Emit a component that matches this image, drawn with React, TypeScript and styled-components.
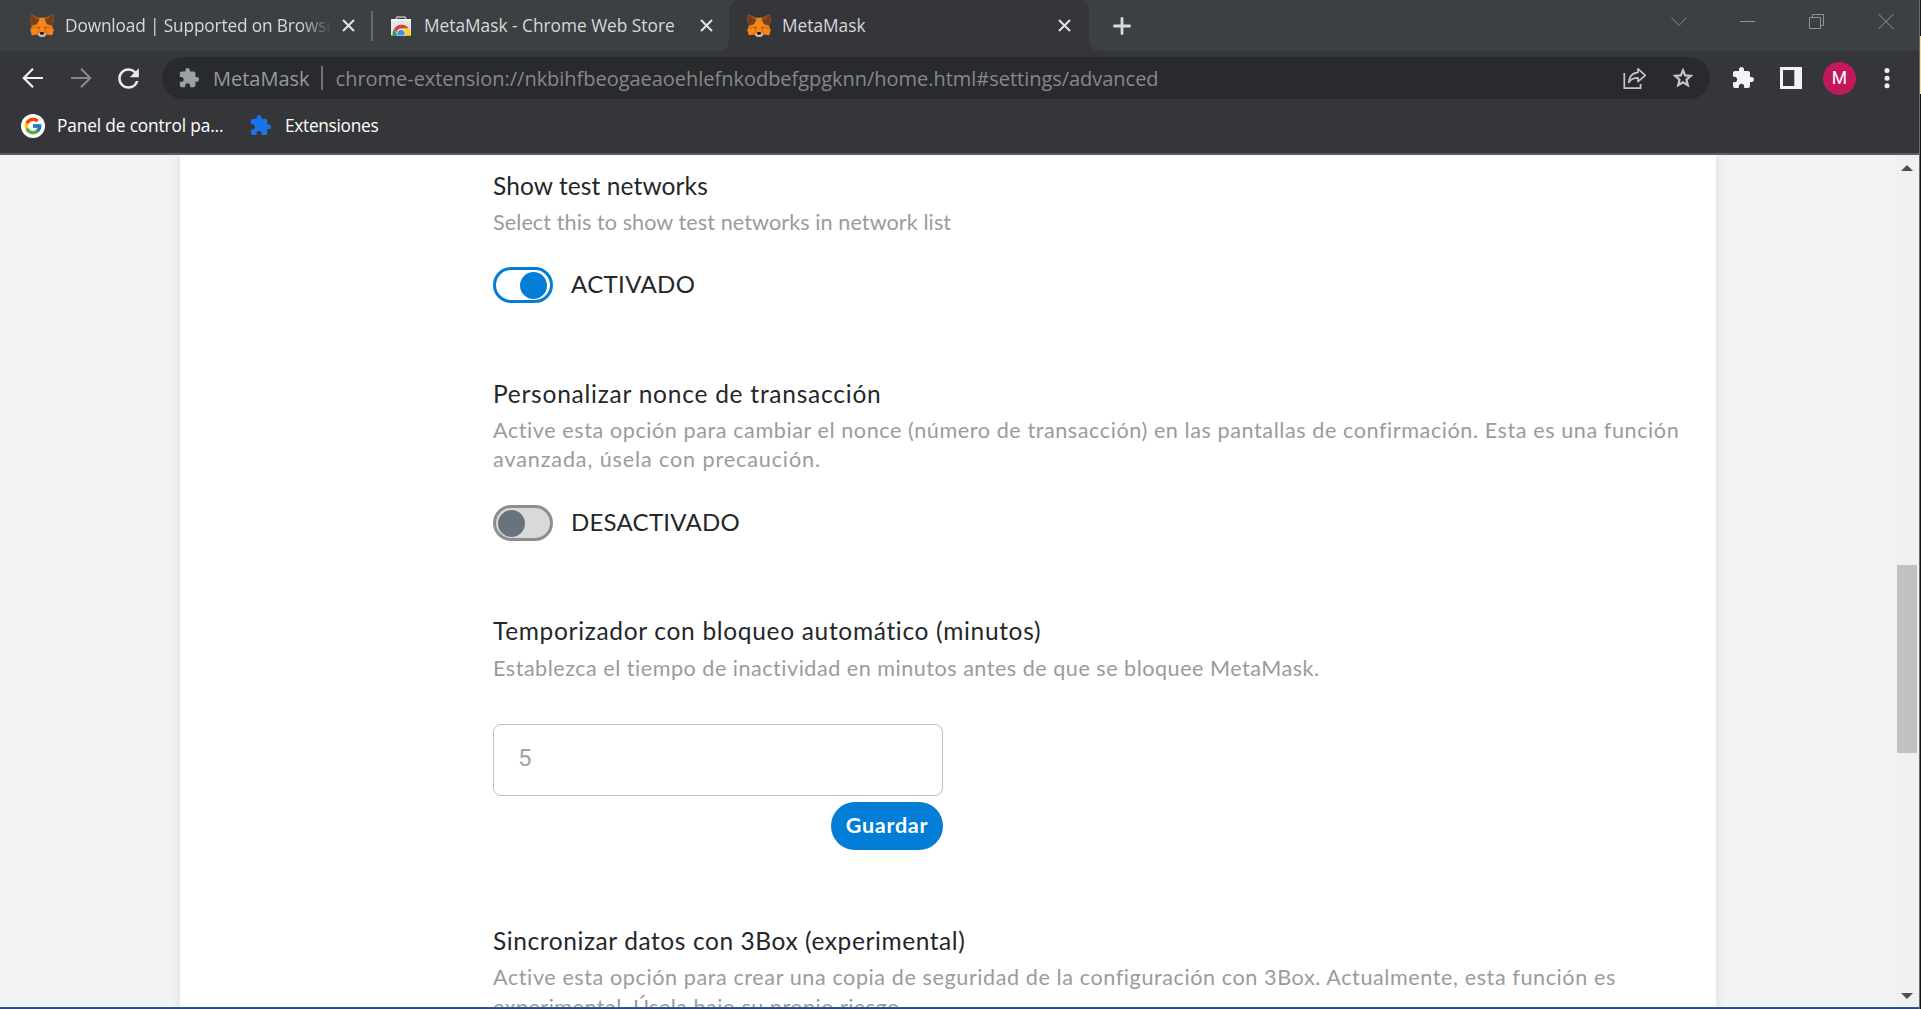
import React from 'react';
import styled, { createGlobalStyle } from 'styled-components';
import { MdExtension, MdRefresh } from 'react-icons/md';
import { FcGoogle } from 'react-icons/fc';

const GlobalStyle = createGlobalStyle`
  * { box-sizing: border-box; }
  html, body { margin: 0; padding: 0; overflow: hidden; background: #35363a; }
  svg { display: block; flex: none; }
`;

const chromeFont = `'Open Sans', 'Noto Sans', sans-serif`;
const pageFont = `Lato, 'Open Sans', sans-serif`;

const Desktop = styled.div`
  display: grid;
  grid-template-columns: 1919px 1px 1px;
  width: 1921px;
  height: 1009px;
  overflow: hidden;
`;
const Window = styled.div`
  display: flex;
  flex-direction: column;
  min-width: 0;
  height: 1009px;
`;
const WindowEdge = styled.div`
  background: #6b6c6e;
`;
const Behind = styled.div`
  background: linear-gradient(#191c1c 0 36px, #f3dfa6 36px 94px, #101212 94px);
`;

/* Tab strip */
const TabStrip = styled.div`
  display: flex;
  height: 51px;
  flex: none;
  background: #35363a;
`;
const InactiveTabs = styled.div`
  display: flex;
  align-items: center;
  width: 729px;
  background: #3c4043;
  border-radius: 0 0 10px 0;
`;
const Tab = styled.div<{ $width: number; $left: number; $right: number }>`
  display: flex;
  align-items: center;
  width: ${(p) => p.$width}px;
  height: 51px;
  padding-left: ${(p) => p.$left}px;
  padding-right: ${(p) => p.$right}px;
`;
const ActiveTabWrap = styled.div`
  background: #3c4043;
`;
const ActiveTab = styled(Tab)`
  background: #35363a;
  border-radius: 11px 11px 0 0;
`;
const TabTitle = styled.span<{ $gap: number; $fade?: boolean; $spacing?: number }>`
  flex: 1;
  min-width: 0;
  margin-left: ${(p) => p.$gap}px;
  margin-right: ${(p) => (p.$fade ? 10 : 0)}px;
  overflow: hidden;
  white-space: nowrap;
  font: 17.3px/28px ${chromeFont};
  letter-spacing: ${(p) => p.$spacing ?? 0}px;
  color: #d6d8da;
  ${(p) => p.$fade && 'mask-image: linear-gradient(90deg, #000 calc(100% - 32px), transparent);'}
`;
const TabDivider = styled.div`
  width: 2px;
  height: 30px;
  background: #66696c;
`;
const StripRest = styled.div`
  display: flex;
  flex: 1;
  align-items: center;
  padding-left: 24px;
  background: #3c4043;
  border-radius: 0 0 0 10px;
`;
const WindowControls = styled.div`
  display: flex;
  gap: 53px;
  margin: -8px 25px 0 auto;
`;

/* Toolbar */
const Toolbar = styled.div`
  display: flex;
  align-items: center;
  height: 54px;
  flex: none;
  padding-left: 21px;
  background: #35363a;
`;
const NavButtons = styled.div`
  display: flex;
  align-items: center;
  width: 141px;
  gap: 24px;
  color: #e8eaed;
`;
const ReloadButton = styled.div`
  margin-left: -4px;
`;
const Omnibox = styled.div`
  display: flex;
  align-items: center;
  width: 1548px;
  height: 42px;
  padding: 0 16px 0 16px;
  border-radius: 21px;
  background: #292a2d;
  color: #9aa0a6;
`;
const UrlText = styled.span<{ $gap: number; $dim?: boolean; $spacing?: number }>`
  margin: 1px 0 0 ${(p) => p.$gap}px;
  font: 20px/30px ${chromeFont};
  letter-spacing: ${(p) => p.$spacing ?? 0}px;
  white-space: nowrap;
  color: ${(p) => (p.$dim ? '#86888b' : '#969ba1')};
`;
const UrlDivider = styled.div`
  width: 2px;
  height: 24px;
  margin-left: 11px;
  background: #6f7276;
`;
const OmniActions = styled.div`
  display: flex;
  align-items: center;
  gap: 25px;
  margin-left: auto;
  color: #c4c6c8;
`;
const ToolbarActions = styled.div`
  display: flex;
  align-items: center;
  margin-left: 21px;
  color: #f1f3f4;
`;
const PanelButton = styled.div`
  margin-left: 25px;
`;
const Avatar = styled.div`
  display: flex;
  align-items: center;
  justify-content: center;
  width: 33px;
  height: 33px;
  margin: 1px 27px 0 21px;
  border-radius: 50%;
  background: #c2185b;
  color: #fff;
  font: 17.5px/33px Roboto, sans-serif;
`;
const BookmarkBar = styled.div`
  display: flex;
  align-items: center;
  height: 50px;
  flex: none;
  padding: 0 0 7px 21px;
  background: #35363a;
  border-bottom: 2px solid #5c5d61;
`;
const Bookmark = styled.div<{ $width: number; $gap: number; $spacing: number }>`
  display: flex;
  align-items: center;
  gap: ${(p) => p.$gap}px;
  width: ${(p) => p.$width}px;
  white-space: nowrap;
  font: 17.3px/26px ${chromeFont};
  letter-spacing: ${(p) => p.$spacing}px;
  color: #fff;
`;
const GoogleBadge = styled.div`
  display: flex;
  align-items: center;
  justify-content: center;
  flex: none;
  width: 24px;
  height: 24px;
  border-radius: 50%;
  background: #fff;
`;

/* Page */
const Page = styled.div`
  display: flex;
  flex: 1;
  min-height: 0;
  overflow: hidden;
  background: #f2f3f5;
`;
const Panel = styled.main`
  width: 1536px;
  margin-left: 180px;
  padding: 13px 0 0 313px;
  background: #fff;
  box-shadow: 0 0 11px rgba(0, 0, 0, 0.1);
`;
const Setting = styled.section`
  margin-bottom: 73px;
  font-family: ${pageFont};
`;
const Heading = styled.h2<{ $spacing: number }>`
  margin: 0 0 5.7px;
  padding-top: 0.7px;
  font-size: 24.5px;
  font-weight: 400;
  line-height: 33.6px;
  letter-spacing: ${(p) => p.$spacing}px;
  color: #24272a;
  white-space: nowrap;
`;
const Line = styled.p<{ $spacing: number }>`
  margin: 0;
  font-size: 21.6px;
  line-height: 29.4px;
  letter-spacing: ${(p) => p.$spacing}px;
  color: #9b9b9b;
  white-space: nowrap;
`;
const ToggleRow = styled.div`
  display: flex;
  align-items: center;
  gap: 18px;
  margin-top: 29.7px;
`;
const ToggleTrack = styled.div<{ $on: boolean }>`
  display: flex;
  align-items: center;
  justify-content: ${(p) => (p.$on ? 'flex-end' : 'flex-start')};
  width: 60px;
  height: 36px;
  padding: ${(p) => (p.$on ? '1px 3px 0 0' : '1px 0 0 2px')};
  border: 3px solid ${(p) => (p.$on ? '#037dd6' : '#8e8e8e')};
  border-radius: 18px;
  background: ${(p) => (p.$on ? '#fff' : '#d9d9d9')};
`;
const ToggleKnob = styled.div<{ $on: boolean }>`
  width: 27px;
  height: 27px;
  border-radius: 50%;
  background: ${(p) => (p.$on ? '#037dd6' : '#6a737d')};
`;
const ToggleLabel = styled.span<{ $spacing: number }>`
  font-size: 24px;
  line-height: 34px;
  letter-spacing: ${(p) => p.$spacing}px;
  margin-top: -2px;
  color: #24272a;
`;
const Form = styled.div`
  display: flex;
  flex-direction: column;
  align-items: flex-end;
  width: 450px;
  margin-top: 41.5px;
`;
const NumberField = styled.div`
  width: 450px;
  height: 72px;
  padding: 0 24px 2px;
  border: 1px solid #bbc0c5;
  border-radius: 8px;
  font: 24px/67px Roboto, sans-serif;
  color: #a2a2a2;
`;
const SaveButton = styled.button`
  width: 112px;
  height: 48px;
  margin-top: 6px;
  padding: 0 0 2px;
  border: 0;
  border-radius: 24px;
  background: #037dd6;
  color: #fff;
  font: 700 21.6px/40px ${pageFont};
  letter-spacing: 0.7px;
`;
const ScrollBar = styled.div`
  display: flex;
  flex-direction: column;
  align-items: center;
  width: 24px;
  margin-left: auto;
  padding: 10px 0 8px;
  background: #f0f0f0;
`;
const Thumb = styled.div`
  width: 20px;
  height: 188px;
  margin: 394px 0 auto;
  background: #c1c1c1;
`;
const Taskbar = styled.div`
  height: 2px;
  flex: none;
  background: linear-gradient(#3d5f8f, #1f4274);
`;

const Fox = () => (
  <svg width="24" height="23" viewBox="0 0 72 69">
    <path fill="#f6851b" d="M3 1 26 11H46L69 1 71 20 66 36 71 48 66 64 52 61 43 68H29L20 61 6 64 1 48 6 36 1 20Z" />
    <path fill="#e2761b" d="M6 36 24 36 30 52 20 61 6 64 1 48ZM66 36 48 36 42 52 52 61 66 64 71 48Z" />
    <path fill="#f6851b" d="M3 46 24 42 20 60 6 64ZM69 46 48 42 52 60 66 64Z" />
    <path fill="#763e1a" d="M3 1 28 17 21 31 5 35 1 20ZM69 1 44 17 51 31 67 35 71 20Z" />
    <path fill="#8f4a17" d="M3 1 25 12 29 17 23 20ZM69 1 47 12 43 17 49 20Z" />
    <path fill="#5a3a22" d="M21 41 28 39 29 44ZM51 41 44 39 43 44Z" />
    <path fill="#d7c1b3" d="M24 61 31 55H41L48 61 42 68H30Z" />
    <path fill="#161616" d="M29 58 32 54H40L43 58 40 62H32Z" />
  </svg>
);

const StoreIcon = () => (
  <svg width="20" height="20" viewBox="0 0 20 20">
    <path d="M5.5 4V1.8q0-.8.8-.8h7.4q.8 0 .8.8V4" fill="none" stroke="#b9bbbd" strokeWidth="1.6" />
    <path d="M0 3H20V19.5H0Z" fill="#e4e5e6" />
    <path d="M0 3H20V5H0Z" fill="#f4f4f4" />
    <path d="M1.5 19.5a8.8 8.8 0 0 1 1.6-6.6L7 19.5Z" fill="#2ea043" />
    <path d="M3 13a9 9 0 0 1 15-0.5H10a4.5 4.5 0 0 0-4.2 3.8Z" fill="#dc3a32" />
    <path d="M12 12.5h6a9 9 0 0 1 1.2 7H13Z" fill="#fdd219" />
    <circle cx="10" cy="17.5" r="4.4" fill="#f4f4f4" />
    <path d="M6.7 19.5a3.8 3.8 0 1 1 6.6 0Z" fill="#3f8ee8" />
  </svg>
);

const CloseIcon = () => (
  <svg width="13" height="13" viewBox="0 0 13 13" stroke="#dfe1e3" strokeWidth="2.1">
    <path d="M1 1 12 12M12 1 1 12" />
  </svg>
);

const PlusIcon = () => (
  <svg width="18" height="18" viewBox="0 0 18 18" stroke="#d9dbdd" strokeWidth="2.8" strokeLinecap="round">
    <path d="M9 1.4V16.6M1.4 9H16.6" />
  </svg>
);

const Arrow = ({ color, flip }: { color: string; flip?: boolean }) => (
  <svg width="24" height="24" viewBox="0 0 24 24" fill="none" stroke={color} strokeWidth="2.2">
    <path d={flip ? 'M2 12H21M12 2.8 21.2 12 12 21.2' : 'M22 12H3M12 2.8 2.8 12 12 21.2'} />
  </svg>
);

const ShareIcon = () => (
  <svg width="24" height="23" viewBox="0 0 24 23" fill="none" stroke="currentColor" strokeWidth="1.7">
    <path d="M1.3 6V21.2H17.6V17" />
    <path d="M15 1.9 22.3 8.3 15 14.6V10.9C10.5 10.8 8 12 5.7 15.5 6.1 9.8 9.3 6 15 5.3Z" strokeLinejoin="round" />
  </svg>
);

const StarIcon = () => (
  <svg width="22" height="22" viewBox="0 0 22 22" fill="none" stroke="currentColor" strokeWidth="2.2">
    <path d="M11 3.2 13.2 8.4 18.8 8.9 14.5 12.6 15.8 18.1 11 15.2 6.2 18.1 7.5 12.6 3.2 8.9 8.8 8.4Z" />
  </svg>
);

const SidePanelIcon = () => (
  <svg width="22" height="22" viewBox="0 0 22 22" fillRule="evenodd">
    <path fill="currentColor" d="M0 0H22V22H0ZM3 3V19H14.3V3Z" />
  </svg>
);

const Controls = () => (
  <WindowControls>
    <svg width="16" height="16" viewBox="0 0 16 16" fill="none" stroke="#86898c">
      <path d="M.5 3.5 8 11.5 15.5 3.5" />
    </svg>
    <svg width="16" height="16" viewBox="0 0 16 16" stroke="#909395">
      <path d="M0 7.5H15" />
    </svg>
    <svg width="16" height="16" viewBox="0 0 16 16" fill="none" stroke="#909395">
      <path d="M.5 3.5H11.5V14.5H.5ZM3.5 3.5V.5H14.5V11.5H11.5" />
    </svg>
    <svg width="16" height="16" viewBox="0 0 16 16" stroke="#909395">
      <path d="M.5 0 15.5 15M15.5 0 .5 15" />
    </svg>
  </WindowControls>
);

const Toggle = ({ on, label, spacing }: { on: boolean; label: string; spacing: number }) => (
  <ToggleRow>
    <ToggleTrack $on={on}>
      <ToggleKnob $on={on} />
    </ToggleTrack>
    <ToggleLabel $spacing={spacing}>{label}</ToggleLabel>
  </ToggleRow>
);

export default function App() {
  return (
    <Desktop>
      <GlobalStyle />
      <Window>
        <TabStrip>
          <InactiveTabs>
            <Tab $width={371} $left={30} $right={16}>
              <Fox />
              <TabTitle $gap={11} $fade $spacing={-0.15}>Download | Supported on Browse</TabTitle>
              <CloseIcon />
            </Tab>
            <TabDivider />
            <Tab $width={356} $left={18} $right={16}>
              <StoreIcon />
              <TabTitle $gap={13}>MetaMask - Chrome Web Store</TabTitle>
              <CloseIcon />
            </Tab>
          </InactiveTabs>
          <ActiveTabWrap>
            <ActiveTab $width={360} $left={18} $right={18}>
              <Fox />
              <TabTitle $gap={11}>MetaMask</TabTitle>
              <CloseIcon />
            </ActiveTab>
          </ActiveTabWrap>
          <StripRest>
            <PlusIcon />
            <Controls />
          </StripRest>
        </TabStrip>

        <Toolbar>
          <NavButtons>
            <Arrow color="#f1f3f4" />
            <Arrow color="#85878a" flip />
            <ReloadButton>
              <MdRefresh size={31} />
            </ReloadButton>
          </NavButtons>
          <Omnibox>
            <MdExtension size={22} />
            <UrlText $gap={13}>MetaMask</UrlText>
            <UrlDivider />
            <UrlText $gap={13} $dim $spacing={-0.03}>
              chrome-extension://nkbihfbeogaeaoehlefnkodbefgpgknn/home.html#settings/advanced
            </UrlText>
            <OmniActions>
              <ShareIcon />
              <StarIcon />
            </OmniActions>
          </Omnibox>
          <ToolbarActions>
            <MdExtension size={24} />
            <PanelButton>
              <SidePanelIcon />
            </PanelButton>
            <Avatar>M</Avatar>
            <svg width="8" height="22" viewBox="0 0 8 22" fill="currentColor">
              <circle cx="4" cy="3.6" r="2.5" />
              <circle cx="4" cy="11.2" r="2.5" />
              <circle cx="4" cy="18.8" r="2.5" />
            </svg>
          </ToolbarActions>
        </Toolbar>

        <BookmarkBar>
          <Bookmark $width={228} $gap={12} $spacing={-0.14}>
            <GoogleBadge>
              <FcGoogle size={20} />
            </GoogleBadge>
            Panel de control pa...
          </Bookmark>
          <Bookmark $width={200} $gap={13} $spacing={-0.3}>
            <MdExtension size={23} color="#1a73e8" />
            Extensiones
          </Bookmark>
        </BookmarkBar>

        <Page>
          <Panel>
            <Setting>
              <Heading $spacing={0.1}>Show test networks</Heading>
              <Line $spacing={0.08}>Select this to show test networks in network list</Line>
              <Toggle on label="ACTIVADO" spacing={0.35} />
            </Setting>
            <Setting>
              <Heading $spacing={0.76}>Personalizar nonce de transacción</Heading>
              <Line $spacing={0.57}>
                Active esta opción para cambiar el nonce (número de transacción) en las pantallas de confirmación. Esta es una función
              </Line>
              <Line $spacing={0.87}>avanzada, úsela con precaución.</Line>
              <Toggle on={false} label="DESACTIVADO" spacing={0.25} />
            </Setting>
            <Setting>
              <Heading $spacing={0.68}>Temporizador con bloqueo automático (minutos)</Heading>
              <Line $spacing={0.5}>
                Establezca el tiempo de inactividad en minutos antes de que se bloquee MetaMask.
              </Line>
              <Form>
                <NumberField>5</NumberField>
                <SaveButton>Guardar</SaveButton>
              </Form>
            </Setting>
            <Setting>
              <Heading $spacing={0.58}>Sincronizar datos con 3Box (experimental)</Heading>
              <Line $spacing={0.58}>
                Active esta opción para crear una copia de seguridad de la configuración con 3Box. Actualmente, esta función es
              </Line>
              <Line $spacing={0.46}>experimental. Úsela bajo su propio riesgo.</Line>
            </Setting>
          </Panel>
          <ScrollBar>
            <svg width="12" height="6" viewBox="0 0 12 6" fill="#505050">
              <path d="M6 0 12 6H0Z" />
            </svg>
            <Thumb />
            <svg width="12" height="6" viewBox="0 0 12 6" fill="#505050">
              <path d="M0 0H12L6 6Z" />
            </svg>
          </ScrollBar>
        </Page>
        <Taskbar />
      </Window>
      <WindowEdge />
      <Behind />
    </Desktop>
  );
}
